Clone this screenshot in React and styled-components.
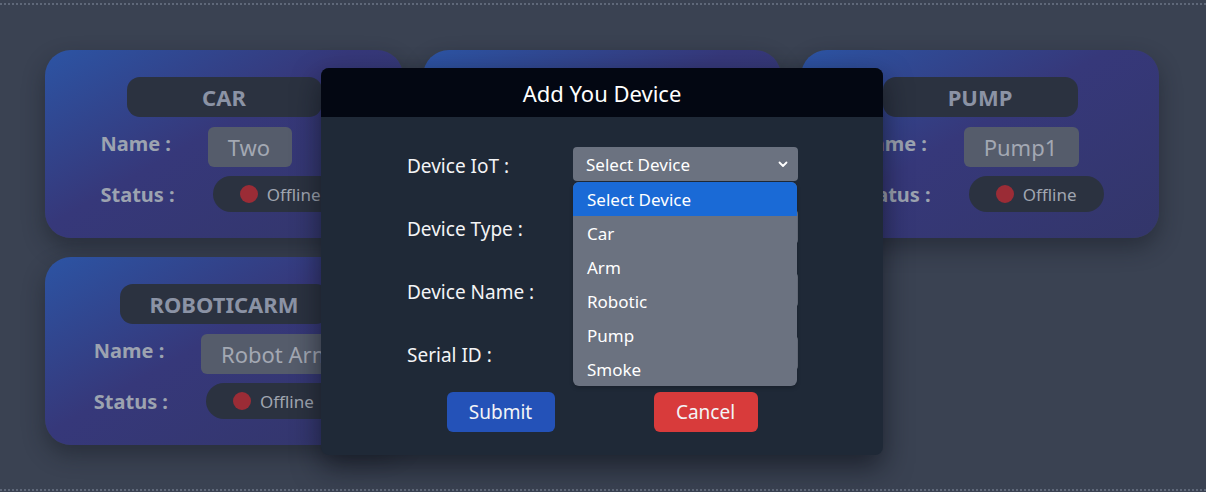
import React from 'react'
import styled, { createGlobalStyle } from 'styled-components';

const GlobalStyle = createGlobalStyle`
    html, body {
        margin: 0;
        padding: 0;
        background: #3a4252;
        font-family: "Noto Sans", "Open Sans", sans-serif;
    }
    * {
        box-sizing: border-box;
    }
`;

const Screen = styled.div`
    position: relative;
    height: 492px;
    overflow: hidden;
    padding-top: 3px;
`;

const Frame = styled.div`
    height: 488px;
    border-top: 2px dotted #5f6879;
    border-bottom: 2px dotted #5f6879;
`;

const Grid = styled.div`
    display: grid;
    grid-template-columns: repeat(3, 358px);
    grid-auto-rows: 188px;
    column-gap: 20px;
    row-gap: 19px;
    padding: 45px 0 0 45px;
`;

const Card = styled.div`
    border-radius: 26px;
    background: linear-gradient(150deg, #2c54a4 0%, #36387a 45%, #33366a 100%);
    box-shadow: 0 10px 22px rgba(20, 24, 34, 0.45);
    display: flex;
    flex-direction: column;
    align-items: center;
    padding-top: 27px;
`;

const Title = styled.div`
    min-width: 195px;
    height: 40px;
    padding: 0 30px;
    border-radius: 13px;
    background: #2b3240;
    color: #8b93a5;
    font-size: 22px;
    font-weight: bold;
    display: flex;
    align-items: center;
    justify-content: center;
    margin-bottom: 10px;
`;

const Info = styled.div`
    display: grid;
    grid-template-columns: auto auto;
    column-gap: 33px;
    row-gap: 9px;
    align-items: center;
`;

const Label = styled.div`
    color: #9ca3b0;
    font-size: 20px;
    font-weight: bold;
    margin-bottom: ${p => (p.$raised ? '8px' : '0')};
`;

const Value = styled.div`
    justify-self: start;
    height: 40px;
    padding: 0 22px 0 20px;
    border-radius: 6px;
    background: #555c6b;
    color: #a3a8b3;
    font-size: 22px;
    display: flex;
    align-items: center;
`;

const StatusPill = styled.div`
    justify-self: start;
    margin-left: 5px;
    height: 36px;
    padding: 0 27px;
    border-radius: 18px;
    background: #2b3240;
    color: #a0a6b1;
    font-size: 17px;
    display: flex;
    align-items: center;
    gap: 9px;
`;

const Dot = styled.span`
    width: 18px;
    height: 18px;
    border-radius: 50%;
    background: ${p => (p.$online ? '#2f9e5b' : '#9b2c36')};
`;

const Overlay = styled.div`
    position: absolute;
    inset: 0;
    display: flex;
    justify-content: center;
    align-items: flex-start;
    padding: 68px 2px 0 0;
`;

const Modal = styled.div`
    width: 562px;
    height: 387px;
    border-radius: 8px;
    background: #1f2937;
    box-shadow: 0 12px 28px rgba(10, 14, 22, 0.6);
`;

const ModalHeader = styled.div`
    height: 49px;
    border-radius: 8px 8px 0 0;
    background: #030712;
    color: #ffffff;
    font-size: 22px;
    display: flex;
    align-items: center;
    justify-content: center;
`;

const Form = styled.div`
    display: grid;
    grid-template-columns: 166px 225px;
    grid-auto-rows: 34px;
    row-gap: 29px;
    padding: 30px 0 0 86px;
    align-items: center;
`;

const FormLabel = styled.label`
    color: #f3f4f6;
    font-size: 19px;
    padding-top: 3px;
`;

const Field = styled.div`
    position: relative;
    height: 34px;
    border-radius: 4px;
    background: #6b7280;
    color: #ffffff;
    font-size: 17px;
    display: flex;
    align-items: center;
    justify-content: space-between;
    padding: 0 10px 0 13px;
`;

const Options = styled.div`
    position: absolute;
    top: 35px;
    left: 0;
    width: 224px;
    border-radius: 6px;
    background: #6b7280;
    box-shadow: 0 2px 4px rgba(0, 0, 0, 0.2);
    overflow: hidden;
    z-index: 2;
`;

const Option = styled.div`
    height: 34px;
    padding-left: 14px;
    display: flex;
    align-items: center;
    color: #ffffff;
    font-size: 17px;
    background: ${p => (p.$active ? '#1a6ad6' : 'transparent')};
`;

const Actions = styled.div`
    display: flex;
    justify-content: center;
    gap: 99px;
    margin-top: 22px;
`;

const Button = styled.button`
    width: ${p => p.$w}px;
    height: 40px;
    border: none;
    border-radius: 6px;
    background: ${p => p.$bg};
    color: #f3f4f6;
    font-family: inherit;
    font-size: 19px;
    cursor: pointer;
`;

const devices = [
    { type: 'CAR', name: 'Two' },
    { type: '', name: '' },
    { type: 'PUMP', name: 'Pump1' },
    { type: 'ROBOTICARM', name: 'Robot Arm' },
];

const options = ['Select Device', 'Car', 'Arm', 'Robotic', 'Pump', 'Smoke'];

const Chevron = () => (
    <svg width="10" height="7" viewBox="0 0 10 7">
        <polyline points="1.5,1.5 5,5 8.5,1.5" fill="none" stroke="#ffffff" strokeWidth="1.8" strokeLinecap="round" strokeLinejoin="round" />
    </svg>
);

const DeviceCard = ({ type, name }) => (
    <Card>
        <Title>{type}</Title>
        <Info>
            <Label $raised>Name :</Label>
            <Value>{name}</Value>
            <Label>Status :</Label>
            <StatusPill><Dot />Offline</StatusPill>
        </Info>
    </Card>
);

const App = () => {
  return (
    <Screen>
        <GlobalStyle />
        <Frame>
            <Grid>
                {devices.map((d, i) => (
                    <DeviceCard key={i} type={d.type} name={d.name} />
                ))}
            </Grid>
        </Frame>
        <Overlay>
            <Modal>
                <ModalHeader>Add You Device</ModalHeader>
                <Form>
                    <FormLabel>Device IoT :</FormLabel>
                    <Field>
                        Select Device
                        <Chevron />
                        <Options>
                            {options.map((o, i) => (
                                <Option key={o} $active={i === 0}>{o}</Option>
                            ))}
                        </Options>
                    </Field>
                    <FormLabel>Device Type :</FormLabel>
                    <Field />
                    <FormLabel>Device Name :</FormLabel>
                    <Field />
                    <FormLabel>Serial ID :</FormLabel>
                    <Field />
                </Form>
                <Actions>
                    <Button $w={108} $bg="#2452b8">Submit</Button>
                    <Button $w={104} $bg="#d83b3b">Cancel</Button>
                </Actions>
            </Modal>
        </Overlay>
    </Screen>
  )
}

export default App
